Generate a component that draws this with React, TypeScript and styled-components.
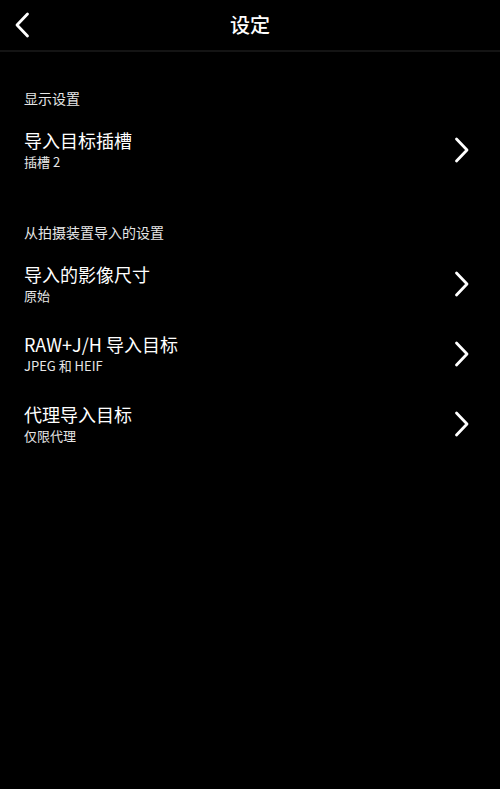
import styled, { createGlobalStyle } from "styled-components";

const GlobalStyle = createGlobalStyle`
  html, body {
    margin: 0;
    padding: 0;
    background: #000;
  }
  body {
    font-family: "Noto Sans CJK SC", "Noto Sans", sans-serif;
    color: #fff;
  }
`;

const Screen = styled.div`
  width: 500px;
  min-height: 789px;
  background: #000;
  display: flex;
  flex-direction: column;
`;

const Header = styled.header`
  height: 50px;
  border-bottom: 2px solid #141414;
  display: grid;
  grid-template-columns: 60px 1fr 60px;
  align-items: center;
`;

const BackButton = styled.button`
  background: none;
  border: none;
  padding: 0 0 0 14px;
  height: 50px;
  display: flex;
  align-items: center;
  cursor: pointer;
`;

const Title = styled.h1`
  margin: 0;
  text-align: center;
  font-size: 20px;
  font-weight: 500;
  line-height: 24px;
  color: #fff;
`;

const Content = styled.main`
  display: flex;
  flex-direction: column;
  padding-top: 36px;
  gap: 37px;
`;

const Section = styled.section`
  display: flex;
  flex-direction: column;
`;

const SectionLabel = styled.div`
  padding: 0 24px;
  font-size: 14px;
  line-height: 20px;
  color: #e6e6e6;
  margin-bottom: 7px;
`;

const Row = styled.div`
  display: flex;
  align-items: center;
  justify-content: space-between;
  padding: 14px 30px 14px 24px;
  cursor: pointer;
`;

const RowText = styled.div`
  display: flex;
  flex-direction: column;
  gap: 2px;
`;

const RowTitle = styled.div`
  font-size: 18px;
  line-height: 22px;
  color: #fff;
`;

const RowValue = styled.div`
  font-size: 13px;
  line-height: 18px;
  color: #e6e6e6;
`;

const Chevron = ({ dir }: { dir: "left" | "right" }) => (
  <svg width="16" height="26" viewBox="0 0 16 26" fill="none">
    <polyline
      points={dir === "right" ? "2.5,2 13,13 2.5,24" : "13.5,2 3,13 13.5,24"}
      stroke="#fff"
      strokeWidth="2.8"
      strokeLinecap="round"
      strokeLinejoin="round"
    />
  </svg>
);

type Item = { title: string; value: string };

const sections: { label: string; items: Item[] }[] = [
  {
    label: "显示设置",
    items: [{ title: "导入目标插槽", value: "插槽 2" }],
  },
  {
    label: "从拍摄装置导入的设置",
    items: [
      { title: "导入的影像尺寸", value: "原始" },
      { title: "RAW+J/H 导入目标", value: "JPEG 和 HEIF" },
      { title: "代理导入目标", value: "仅限代理" },
    ],
  },
];

export default function App() {
  return (
    <>
      <GlobalStyle />
      <Screen>
        <Header>
          <BackButton aria-label="返回">
            <Chevron dir="left" />
          </BackButton>
          <Title>设定</Title>
          <span />
        </Header>
        <Content>
          {sections.map((s) => (
            <Section key={s.label}>
              <SectionLabel>{s.label}</SectionLabel>
              {s.items.map((it) => (
                <Row key={it.title}>
                  <RowText>
                    <RowTitle>{it.title}</RowTitle>
                    <RowValue>{it.value}</RowValue>
                  </RowText>
                  <Chevron dir="right" />
                </Row>
              ))}
            </Section>
          ))}
        </Content>
      </Screen>
    </>
  );
}
